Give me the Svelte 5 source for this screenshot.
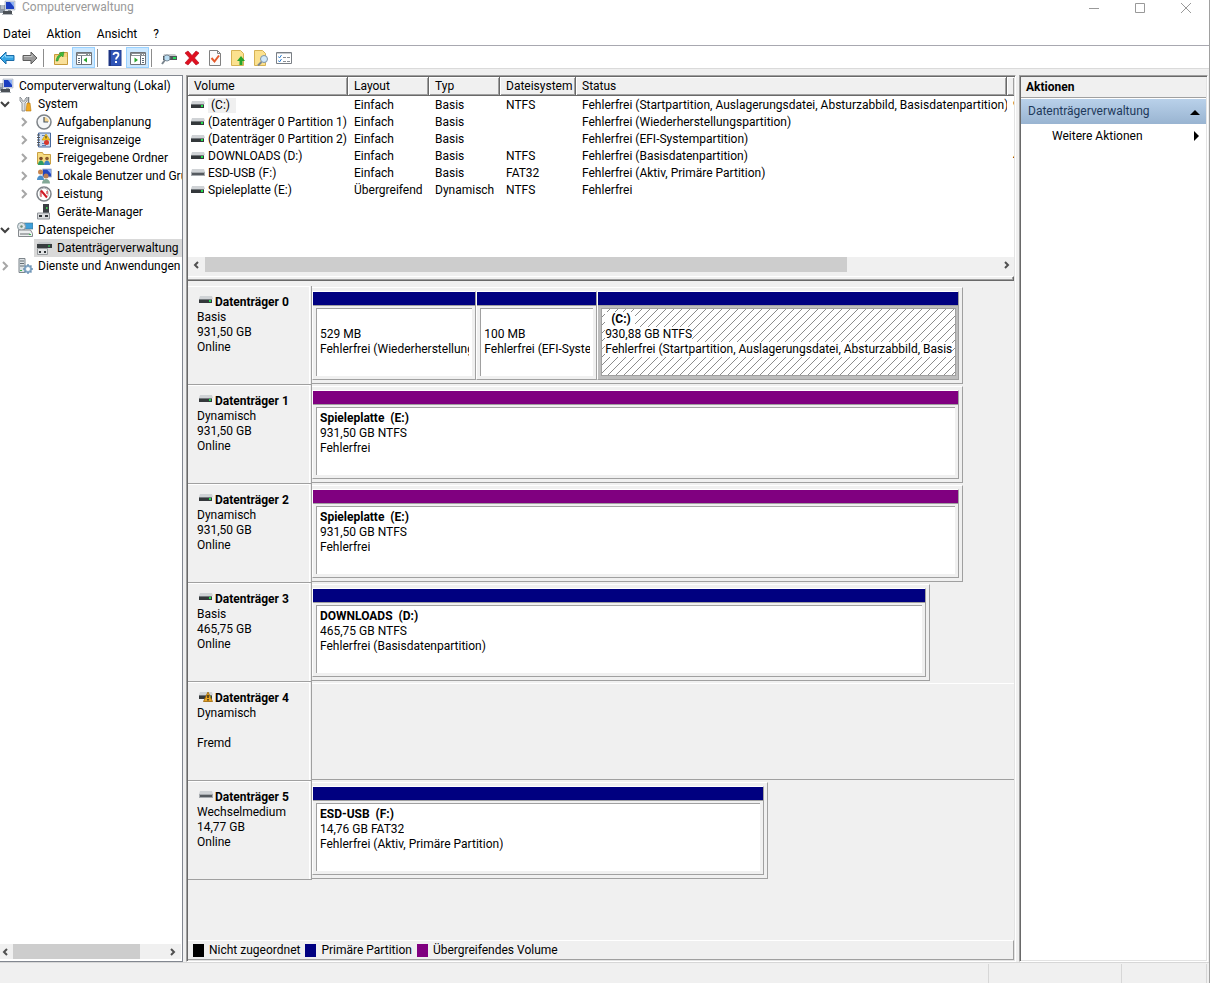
<script lang="ts">
  interface TreeNode {
    label: string;
    icon: string;
    level: number;
    arrow?: 'open' | 'closed';
    selected?: boolean;
  }

  interface Partition {
    title?: string;
    size: string;
    status: string;
    share: number;
    kind: 'primary' | 'spanned';
    selected?: boolean;
  }

  interface Disk {
    name: string;
    icon: string;
    type: string;
    size: string;
    state: string;
    width: number; // percent of the available strip
    partitions: Partition[];
  }

  const MENU = ['Datei', 'Aktion', 'Ansicht', '?'];

  const TOOLS = [
    { icon: 'back', label: 'Zurück' },
    { icon: 'forward', label: 'Vorwärts' },
    { icon: 'sep', label: '' },
    { icon: 'folder-up', label: 'Aufwärts' },
    { icon: 'pane-left', label: 'Konsolenstruktur', active: true },
    { icon: 'sep', label: '' },
    { icon: 'help', label: 'Hilfe' },
    { icon: 'pane-right', label: 'Aktionsbereich', active: true },
    { icon: 'sep', label: '' },
    { icon: 'rescan', label: 'Aktualisieren' },
    { icon: 'delete', label: 'Löschen' },
    { icon: 'doc-check', label: 'Eigenschaften' },
    { icon: 'doc-up', label: 'Öffnen' },
    { icon: 'doc-search', label: 'Durchsuchen' },
    { icon: 'list', label: 'Optionen' },
  ];

  const TREE: TreeNode[] = [
    { label: 'Computerverwaltung (Lokal)', icon: 'computer', level: 0 },
    { label: 'System', icon: 'tools', level: 1, arrow: 'open' },
    { label: 'Aufgabenplanung', icon: 'clock', level: 2, arrow: 'closed' },
    { label: 'Ereignisanzeige', icon: 'events', level: 2, arrow: 'closed' },
    { label: 'Freigegebene Ordner', icon: 'shared', level: 2, arrow: 'closed' },
    { label: 'Lokale Benutzer und Gruppen', icon: 'users', level: 2, arrow: 'closed' },
    { label: 'Leistung', icon: 'gauge', level: 2, arrow: 'closed' },
    { label: 'Geräte-Manager', icon: 'device', level: 2 },
    { label: 'Datenspeicher', icon: 'storage', level: 1, arrow: 'open' },
    { label: 'Datenträgerverwaltung', icon: 'diskmgmt', level: 2, selected: true },
    { label: 'Dienste und Anwendungen', icon: 'services', level: 1, arrow: 'closed' },
  ];

  const COLUMNS = ['Volume', 'Layout', 'Typ', 'Dateisystem', 'Status', ''];

  const VOLUMES = [
    { icon: 'drive', cells: ['(C:)', 'Einfach', 'Basis', 'NTFS', 'Fehlerfrei (Startpartition, Auslagerungsdatei, Absturzabbild, Basisdatenpartition)', '9'], selected: true },
    { icon: 'drive', cells: ['(Datenträger 0 Partition 1)', 'Einfach', 'Basis', '', 'Fehlerfrei (Wiederherstellungspartition)', ''] },
    { icon: 'drive', cells: ['(Datenträger 0 Partition 2)', 'Einfach', 'Basis', '', 'Fehlerfrei (EFI-Systempartition)', ''] },
    { icon: 'drive', cells: ['DOWNLOADS (D:)', 'Einfach', 'Basis', 'NTFS', 'Fehlerfrei (Basisdatenpartition)', '4'] },
    { icon: 'removable', cells: ['ESD-USB (F:)', 'Einfach', 'Basis', 'FAT32', 'Fehlerfrei (Aktiv, Primäre Partition)', ''] },
    { icon: 'drive', cells: ['Spieleplatte (E:)', 'Übergreifend', 'Dynamisch', 'NTFS', 'Fehlerfrei', ''] },
  ];

  const DISKS: Disk[] = [
    {
      name: 'Datenträger 0', icon: 'drive', type: 'Basis', size: '931,50 GB', state: 'Online', width: 92.8,
      partitions: [
        { size: '529 MB', status: 'Fehlerfrei (Wiederherstellungspartition)', share: 164, kind: 'primary' },
        { size: '100 MB', status: 'Fehlerfrei (EFI-Systempartition)', share: 120, kind: 'primary' },
        { title: '(C:)', size: '930,88 GB NTFS', status: 'Fehlerfrei (Startpartition, Auslagerungsdatei, Absturzabbild, Basisdatenpartition)', share: 364, kind: 'primary', selected: true },
      ],
    },
    {
      name: 'Datenträger 1', icon: 'drive', type: 'Dynamisch', size: '931,50 GB', state: 'Online', width: 92.8,
      partitions: [{ title: 'Spieleplatte  (E:)', size: '931,50 GB NTFS', status: 'Fehlerfrei', share: 1, kind: 'spanned' }],
    },
    {
      name: 'Datenträger 2', icon: 'drive', type: 'Dynamisch', size: '931,50 GB', state: 'Online', width: 92.8,
      partitions: [{ title: 'Spieleplatte  (E:)', size: '931,50 GB NTFS', status: 'Fehlerfrei', share: 1, kind: 'spanned' }],
    },
    {
      name: 'Datenträger 3', icon: 'drive', type: 'Basis', size: '465,75 GB', state: 'Online', width: 88,
      partitions: [{ title: 'DOWNLOADS  (D:)', size: '465,75 GB NTFS', status: 'Fehlerfrei (Basisdatenpartition)', share: 1, kind: 'primary' }],
    },
    { name: 'Datenträger 4', icon: 'drive-warn', type: 'Dynamisch', size: '', state: 'Fremd', width: 100, partitions: [] },
    {
      name: 'Datenträger 5', icon: 'removable', type: 'Wechselmedium', size: '14,77 GB', state: 'Online', width: 65,
      partitions: [{ title: 'ESD-USB  (F:)', size: '14,76 GB FAT32', status: 'Fehlerfrei (Aktiv, Primäre Partition)', share: 1, kind: 'primary' }],
    },
  ];

  const LEGEND = [
    { label: 'Nicht zugeordnet', kind: 'free' },
    { label: 'Primäre Partition', kind: 'primary' },
    { label: 'Übergreifendes Volume', kind: 'spanned' },
  ];
</script>

{#snippet icon(name: string)}
  <svg class="icon" viewBox="0 0 16 16" width="16" height="16" aria-hidden="true">
    {#if name === 'back'}
      <path d="M1 8l6-6v3.500h8v5H7V14z" fill="#35a4e4" stroke="#1b6ca8" />
      <path d="M3 8l3.500-3.500V7H14" fill="none" stroke="#8ed6fa" />
    {:else if name === 'forward'}
      <path d="M15 8L9 2v3.500H1v5h8V14z" fill="#9a9a9a" stroke="#5d5d5d" />
      <path d="M2 6.500h8v-2" fill="none" stroke="#c6c6c6" />
    {:else if name === 'folder-up'}
      <path d="M1.500 14.500v-10h5l1-2h7v12z" fill="#f3d27a" stroke="#c79b3b" />
      <path d="M2 7h12v7H2z" fill="#f9e09a" />
      <path d="M3 11c.5-4 2-6 4.500-6.500L6 3l5-1-1 5-1.300-1.300C7 6.500 5.500 8 5 11z" fill="#3fb93b" stroke="#23872a" stroke-width=".5" />
    {:else if name === 'pane-left' || name === 'pane-right'}
      <path d="M.5 2.500h15v12H.5z" fill="#fff" stroke="#707478" />
      <path d="M1 3h14v3H1z" fill="#8b9095" />
      <path d="M2 4.500h8M12 4.500h1M14 4.500h1" stroke="#fff" />
      {#if name === 'pane-left'}
        <path d="M5.500 6v8M2 8.500h2M2 10.500h2M2 12.500h2" stroke="#5f6b78" />
        <path d="M11 7.500v5L7.500 10z" fill="#27a52b" />
      {:else}
        <path d="M10.500 6v8M12 8.500h2M12 10.500h2M12 12.500h2" stroke="#5f6b78" />
        <path d="M4.500 7.500v5L8 10z" fill="#27a52b" />
      {/if}
    {:else if name === 'help'}
      <path d="M2 0h12v16H2z" fill="#2f55b8" stroke="#203b8c" />
      <path d="M2 0h2v16H2z" fill="#1d3480" />
      <path d="M6.500 5c0-3 5-3 5 0 0 2-2.500 2-2.500 4.500" fill="none" stroke="#fff" stroke-width="1.800" />
      <path d="M8 11h2v2H8z" fill="#fff" />
    {:else if name === 'rescan'}
      <path d="M3 4h11l2 2H2z" fill="#c7cacd" />
      <path d="M2 6h14v4H2z" fill="#4f5559" />
      <path d="M12 7h3v2h-3z" fill="#25d957" />
      <circle cx="6" cy="8" r="3" fill="#b8dcf2" stroke="#7b8b98" />
      <path d="M4 10l-3 4" stroke="#7a858e" stroke-width="2" />
    {:else if name === 'delete'}
      <path d="M1 3l3-2 4 4.500L12 1l3 2-4.500 5 4.500 5-3 2-4-4.500L4 15l-3-2 4.500-5z" fill="#e01020" stroke="#b00012" stroke-width=".6" />
    {:else if name === 'doc-check'}
      <path d="M2.500.5h8l3 3v12h-11z" fill="#fbfbfb" stroke="#808080" />
      <path d="M10.500.5v3h3" fill="none" stroke="#808080" />
      <path d="M4.500 8l3 3.500L12 5.500" fill="none" stroke="#e55a2b" stroke-width="2" />
    {:else if name === 'doc-up'}
      <path d="M1.500.5h9l3 3v12h-12z" fill="#fbe18e" stroke="#d6b254" />
      <path d="M11 6l4 5h-2.500v4h-3v-4H7z" fill="#27a52b" />
    {:else if name === 'doc-search'}
      <path d="M1.500.5h8l3 3v12h-11z" fill="#fbe18e" stroke="#d6b254" />
      <circle cx="11" cy="9" r="3.500" fill="#cfe8fa" stroke="#7d93a6" />
      <path d="M8.500 12L5 15.500" stroke="#7d8791" stroke-width="2" />
    {:else if name === 'list'}
      <path d="M.5 2.500h15v11H.5z" fill="#fff" stroke="#7a7f85" />
      <path d="M1 3h14v1H1z" fill="#c8ccd0" />
      <path d="M2.500 6.500l1 1.500 2-3M2.500 10.500l1 1.500 2-3" fill="none" stroke="#2f7fd0" />
      <path d="M7 7.500h3M11 7.500h3M7 11.500h3M11 11.500h3" stroke="#8a8f95" />
    {:else if name === 'computer'}
      <path d="M5 1h10v9H5z" fill="#d6dce6" stroke="#a1acc0" stroke-width=".6" />
      <path d="M6 2h8v7H6z" fill="#1c3fc0" />
      <path d="M10 2h4v5z" fill="#8fb2f4" />
      <path d="M0 5h5v8H0z" fill="#8d97a3" />
      <path d="M1 6h3M1 8h3" stroke="#e1e6eb" />
      <path d="M8 10h3v2H8z" fill="#8d97a3" />
      <path d="M3 11h9v4H3z" fill="#4b5157" />
      <path d="M2 14.500h11" stroke="#b3b8bd" />
    {:else if name === 'tools'}
      <path d="M3 1v4l2 2v8h3V7l2-2V1L8 3v2H5V3z" fill="#dfe2e4" stroke="#7c8286" stroke-width=".8" />
      <path d="M11.500 1v6" stroke="#7b8187" stroke-width="1.500" />
      <path d="M10 7h3l1 8h-5z" fill="#f0a922" stroke="#b8780d" stroke-width=".6" />
    {:else if name === 'clock'}
      <circle cx="8" cy="8" r="7" fill="#f4f6f8" stroke="#7e8388" stroke-width="1.500" />
      <path d="M8 8V3a5 5 0 0 1 5 5z" fill="#f5d590" />
      <path d="M8 3v5h4" fill="none" stroke="#4b5963" stroke-width="1.200" />
    {:else if name === 'events'}
      <path d="M2.500 1h12v14h-12z" fill="#cbdcf2" stroke="#48689c" />
      <path d="M1 3h3M1 5.500h3M1 8h3M1 10.500h3M1 13h3" stroke="#555" />
      <path d="M6 11.500h3M6 13.500h4M6 3.500h3" stroke="#5e7fb5" />
      <path d="M10 2l4 6H6z" fill="#f9c923" stroke="#c38e05" stroke-width=".6" />
      <path d="M10 4v2.500" stroke="#222" />
      <circle cx="10.500" cy="10.500" r="2.500" fill="#d7372d" />
    {:else if name === 'shared'}
      <path d="M1.500 14V2.500h5l1 2h7V14z" fill="#f7dc82" stroke="#c9a043" />
      <circle cx="5" cy="8.500" r="1.800" fill="#7a4a28" />
      <path d="M2 15c0-6 6-6 6 0z" fill="#2d9b62" />
      <circle cx="11" cy="8.500" r="1.800" fill="#8a5a30" />
      <path d="M8 15c0-6 6-6 6 0z" fill="#3b83c5" />
    {:else if name === 'users'}
      <path d="M6.500 1h9v8h-9z" fill="#2446bd" stroke="#b5bfd2" />
      <path d="M11 1.500h4V6z" fill="#89a9f0" />
      <circle cx="4.500" cy="4" r="2.500" fill="#c88650" />
      <path d="M1 12c0-6 7-6 7 0z" fill="#4b8fca" />
      <circle cx="10" cy="8" r="2.500" fill="#bd8055" />
      <path d="M6 15.500c0-6 8-6 8 0z" fill="#82a896" />
    {:else if name === 'gauge'}
      <circle cx="8" cy="8" r="7" fill="#fff" stroke="#7e8388" stroke-width="1.500" />
      <path d="M4 10V6a4 4 0 0 1 8 0v4" fill="none" stroke="#b1b5b9" />
      <path d="M5 4.500l6 7" stroke="#d01925" stroke-width="2" />
      <path d="M5 5v6M11 5v3" stroke="#d01925" />
    {:else if name === 'device'}
      <path d="M7 0h6v9H7z" fill="#3b3f43" />
      <path d="M10 3h1.500v2H10z" fill="#44cf57" />
      <path d="M1.500 9h12v6h-12z" fill="#dadcde" stroke="#909499" />
      <path d="M3 11h3v2H3zM9 11h3v2H9z" fill="#303438" />
    {:else if name === 'storage'}
      <path d="M7 1h9v6H7z" fill="#3e9fda" stroke="#41707f" stroke-width=".6" />
      <circle cx="4.500" cy="4.500" r="4" fill="#dce3e6" stroke="#87979c" />
      <circle cx="4.500" cy="4.500" r="1.200" fill="#6e8c72" />
      <path d="M1.500 8h12l2 3.500v3h-14z" fill="#eceeef" stroke="#85898d" />
      <path d="M3 12h10" stroke="#676c70" />
      <path d="M12 12h2v1h-2z" fill="#35c44e" />
    {:else if name === 'diskmgmt'}
      <path d="M3 2h11l2 2H1z" fill="#c6c9cb" />
      <path d="M1 4h15v4H1z" fill="#383c3f" />
      <path d="M12 5.500h2v1h-2z" fill="#32e55e" />
      <path d="M1.500 8.500h10v6h-10z" fill="#e2e4e5" stroke="#999da0" />
      <path d="M3 11h2v2H3zM8 11h2v2H8z" fill="#303438" />
    {:else if name === 'services'}
      <path d="M2 .5h6v14H2z" fill="#dde2e5" stroke="#7d858b" />
      <path d="M3 3h4M3 5.500h4M3 8h4" stroke="#656e75" />
      <path d="M3 12h2v1H3z" fill="#39b44b" />
      <circle cx="11" cy="11" r="3" fill="#fff" stroke="#86a9c8" stroke-width="2" />
      <path d="M11 6v2M11 14v2M6 11h2M14 11h2M7.500 7.500l1.500 1.500M13 13l1.500 1.500M14.500 7.500L13 9M9 13l-1.500 1.500" stroke="#6f94b5" stroke-width="1.500" />
    {/if}
  </svg>
{/snippet}

{#snippet driveIcon(name: string)}
  <svg class="drive" viewBox="0 0 14 12" width="14" height="12" aria-hidden="true">
    <path d="M1 2h12l1 3H0z" fill="#d0d3d6" />
    {#if name === 'removable'}
      <path d="M0 5h14v4H0z" fill="#a7abaf" />
      <path d="M1 6h12v2H1z" fill="#565b60" />
    {:else}
      <path d="M0 5h13v4H0z" fill="#34383b" />
      <path d="M0 5h13v1H0z" fill="#73787c" />
      <path d="M10 6h2v2h-2z" fill="#22e04c" />
    {/if}
    {#if name === 'drive-warn'}
      <path d="M9 2l4.500 9.500h-9z" fill="#e9a524" stroke="#9b6508" stroke-width=".8" />
      <path d="M9 5v3M9 9v1.500" stroke="#111" stroke-width="1.200" />
    {/if}
  </svg>
{/snippet}

{#snippet chevron(dir: string)}
  <svg class="chevron {dir}" viewBox="0 0 10 10" width="10" height="10" aria-hidden="true">
    {#if dir === 'open'}
      <path d="M1 3l4 4 4-4" />
    {:else if dir === 'left'}
      <path d="M7 2L4 5l3 3" />
    {:else if dir === 'right'}
      <path d="M4 2l3 3-3 3" />
    {:else}
      <path d="M3 1l4 4-4 4" />
    {/if}
  </svg>
{/snippet}

<div class="window">
  <header class="titlebar">
    <span class="app-icon">{@render icon('computer')}</span>
    <span class="title">Computerverwaltung</span>
    <div class="controls">
      <button type="button" aria-label="Minimieren">
        <svg width="12" height="12" viewBox="0 0 12 12"><path d="M1 6.500h10" /></svg>
      </button>
      <button type="button" aria-label="Maximieren">
        <svg width="12" height="12" viewBox="0 0 12 12"><path d="M1.500 1.500h9v9h-9z" /></svg>
      </button>
      <button type="button" aria-label="Schließen">
        <svg width="12" height="12" viewBox="0 0 12 12"><path d="M1 1l10 10M11 1L1 11" /></svg>
      </button>
    </div>
  </header>

  <nav class="menubar">
    {#each MENU as item}
      <button type="button">{item}</button>
    {/each}
  </nav>

  <div class="toolbar">
    {#each TOOLS as tool}
      {#if tool.icon === 'sep'}
        <span class="sep"></span>
      {:else}
        <button type="button" class:active={tool.active} aria-label={tool.label}>{@render icon(tool.icon)}</button>
      {/if}
    {/each}
  </div>

  <main class="panes">
    <aside class="tree-pane">
      <ul class="tree">
        {#each TREE as node}
          <li class="level-{node.level}">
            {#if node.level > 0}
              <span class="twisty">{#if node.arrow}{@render chevron(node.arrow)}{/if}</span>
            {/if}
            <button type="button" class="node" class:selected={node.selected}>
              {@render icon(node.icon)}
              <span>{node.label}</span>
            </button>
          </li>
        {/each}
      </ul>
      <div class="scrollbar tree-scroll">
        {@render chevron('left')}
        <div class="track"><div class="thumb" style="width: 84%"></div></div>
        {@render chevron('right')}
      </div>
    </aside>

    <section class="center-pane">
      <div class="volume-list">
        <table>
          <colgroup>
            <col class="c-volume" /><col class="c-layout" /><col class="c-type" />
            <col class="c-fs" /><col class="c-status" /><col />
          </colgroup>
          <thead>
            <tr>
              {#each COLUMNS as column}
                <th>{column}</th>
              {/each}
            </tr>
          </thead>
          <tbody>
            {#each VOLUMES as volume}
              <tr>
                {#each volume.cells as cell, i}
                  {#if i === 0}
                    <td class="name">
                      <div class="name-cell">
                        {@render driveIcon(volume.icon)}
                        <span class:focused={volume.selected}>{cell}</span>
                      </div>
                    </td>
                  {:else}
                    <td>{cell}</td>
                  {/if}
                {/each}
              </tr>
            {/each}
          </tbody>
        </table>
        <div class="scrollbar">
          {@render chevron('left')}
          <div class="track"><div class="thumb" style="width: 81%"></div></div>
          {@render chevron('right')}
        </div>
      </div>
      <div class="splitter"></div>

      <div class="disks">
        {#each DISKS as disk}
          <div class="disk">
            <div class="disk-label">
              <div class="disk-info">
                <div class="disk-name">{@render driveIcon(disk.icon)}<strong>{disk.name}</strong></div>
                <div>{disk.type}</div>
                <div>{disk.size}</div>
                <div>{disk.state}</div>
              </div>
            </div>
            <div class="strip-wrap">
              <div class="strip" class:empty={!disk.partitions.length} style="width: {disk.width}%">
                {#each disk.partitions as part}
                  <div class="partition {part.kind}" class:selected={part.selected} style="flex-grow: {part.share}">
                    <div class="bar"></div>
                    <div class="box">
                      {#if part.selected}
                        <svg class="hatch" width="100%" height="100%" aria-hidden="true">
                          <defs>
                            <pattern id="hatch" width="8" height="8" patternUnits="userSpaceOnUse">
                              <path d="M-1 9L9 -1M-1 1L1 -1M7 9L9 7" stroke="#8c8c8c" />
                            </pattern>
                          </defs>
                          <rect width="100%" height="100%" fill="url(#hatch)" />
                        </svg>
                      {/if}
                      <div class="lines">
                        <strong>{part.title ?? ''}</strong>
                        <span>{part.size}</span>
                        <span>{part.status}</span>
                      </div>
                    </div>
                  </div>
                {/each}
              </div>
            </div>
          </div>
        {/each}
      </div>

      <footer class="legend">
        {#each LEGEND as entry}
          <span class="swatch {entry.kind}"></span>
          <span class="legend-text">{entry.label}</span>
        {/each}
      </footer>
    </section>

    <aside class="actions-pane">
      <h2>Aktionen</h2>
      <button type="button" class="group">
        <span>Datenträgerverwaltung</span>
        <svg width="10" height="6" viewBox="0 0 10 6" aria-hidden="true"><path d="M0 6l5-5 5 5z" /></svg>
      </button>
      <button type="button" class="more">
        <span>Weitere Aktionen</span>
        <svg width="6" height="10" viewBox="0 0 6 10" aria-hidden="true"><path d="M0 0l5 5-5 5z" /></svg>
      </button>
    </aside>
  </main>

  <footer class="statusbar">
    <span></span><span></span><span></span>
  </footer>
</div>

<style>
  :global(body) {
    margin: 0;
    background: #f0f0f0;
  }

  .window {
    display: flex;
    flex-direction: column;
    box-sizing: border-box;
    min-height: 100vh;
    overflow: hidden;
    border-right: 1px solid #a0a0a0;
    background: #f0f0f0;
    color: #000;
    font-family: Roboto, 'Open Sans', sans-serif;
    font-size: 12px;
    line-height: 15px;
    white-space: nowrap;
  }

  button {
    margin: 0;
    padding: 0;
    border: 0;
    background: none;
    color: inherit;
    font: inherit;
    white-space: nowrap;
  }

  .icon,
  .drive,
  .chevron {
    display: block;
    flex: none;
  }

  .chevron path {
    fill: none;
    stroke: #505050;
    stroke-width: 2;
  }
  .chevron.closed path {
    stroke: #a6a6a6;
  }
  .chevron.open path {
    stroke: #404040;
  }

  .titlebar {
    display: flex;
    align-items: center;
    height: 15px;
    padding-bottom: 8px;
    background: #fff;
    color: #999;
  }
  .app-icon {
    width: 22px;
  }
  .title {
    flex: 1;
  }
  .controls {
    display: flex;
  }
  .controls button {
    display: flex;
    justify-content: center;
    width: 46px;
  }
  .controls svg {
    fill: none;
    stroke: #999;
  }

  .menubar {
    display: flex;
    gap: 16px;
    height: 22px;
    padding-left: 3px;
    border-bottom: 1px solid #a8a8b0;
    background: #fff;
  }

  .toolbar {
    display: flex;
    height: 21px;
    margin-left: -5px;
    padding-top: 1px;
    border-bottom: 1px solid #dadada;
    background: #fff;
  }
  .toolbar button {
    display: flex;
    align-items: center;
    justify-content: center;
    box-sizing: border-box;
    width: 23px;
    border: 1px solid transparent;
  }
  .toolbar .active {
    border-color: #99d1ff;
    background: #cce8ff;
  }
  .sep {
    width: 5px;
    margin: 2px 0 1px 2px;
    border-left: 1px solid #8c8c8c;
  }

  .panes {
    display: grid;
    flex: 1;
    grid-template-columns: 183px minmax(0, 1fr) 189px;
    margin-top: 6px;
    padding-right: 1px;
  }

  .tree-pane {
    display: flex;
    flex-direction: column;
    min-width: 0;
    border: 1px solid #828790;
    border-left: 0;
    background: #fff;
    overflow: hidden;
  }
  .tree {
    flex: 1;
    margin: 0;
    padding: 1px 0 0;
    list-style: none;
  }
  .tree li {
    display: flex;
    align-items: center;
    height: 18px;
  }
  .level-0 {
    margin-left: -4px;
  }
  .level-2 {
    padding-left: 19px;
  }
  .twisty {
    width: 15px;
    flex: none;
  }
  .node {
    display: flex;
    flex: 1;
    align-items: center;
    gap: 5px;
    height: 18px;
    min-width: 0;
    padding-left: 2px;
  }
  .node.selected {
    background: #d9d9d9;
  }

  .scrollbar {
    display: flex;
    align-items: center;
    gap: 4px;
    height: 15px;
    padding: 0 3px;
    background: #f0f0f0;
  }
  .tree-scroll {
    gap: 3px;
    margin: 0 1px 2px 0;
    padding: 0 4px 0 0;
  }
  .track {
    flex: 1;
  }
  .thumb {
    height: 15px;
    background: #cdcdcd;
  }

  .center-pane {
    display: flex;
    flex-direction: column;
    min-width: 0;
    margin: 0 3px;
    border: 1px solid;
    border-color: #a0a0a0 #fff #fff #a0a0a0;
    box-shadow: inset 1px 1px #696969, inset -1px -1px #e3e3e3;
    padding: 1px;
  }

  .volume-list {
    display: flex;
    flex-direction: column;
    justify-content: space-between;
    height: 195px;
    background: #fff;
  }
  table {
    width: 100%;
    table-layout: fixed;
    border-collapse: separate;
    border-spacing: 0;
  }
  .c-volume { width: 160px; }
  .c-layout { width: 81px; }
  .c-type { width: 71px; }
  .c-fs { width: 76px; }
  .c-status { width: 431px; }
  th {
    height: 18px;
    padding: 0 0 0 6px;
    border-right: 1px solid #696969;
    border-bottom: 1px solid #696969;
    background: #f0f0f0;
    box-shadow: inset 1px 1px #fff, inset -1px -1px #a0a0a0;
    font-weight: normal;
    text-align: left;
    overflow: hidden;
  }
  th:last-child {
    border-right: 0;
  }
  td {
    height: 16px;
    padding: 1px 0 0 6px;
    overflow: hidden;
  }
  td.name {
    padding-left: 3px;
  }
  .name-cell {
    display: flex;
    align-items: center;
    gap: 3px;
  }
  .focused {
    padding: 0 6px 0 3px;
    background: #f0f0f0;
  }

  .splitter {
    height: 2px;
    margin: 4px 0 5px;
    padding-bottom: 1px;
    border-top: 1px solid #fff;
    border-right: 1px solid #696969;
    border-bottom: 1px solid #696969;
    box-shadow: inset -1px -1px #a0a0a0;
  }

  .disks {
    flex: 1;
  }
  .disk {
    display: flex;
    min-height: 99px;
  }
  .disk-label {
    box-sizing: border-box;
    display: flex;
    flex: none;
    width: 124px;
    border-right: 1px solid #a0a0a0;
    border-bottom: 1px solid #a0a0a0;
  }
  .disk-info {
    flex: 1;
    margin-right: 1px;
    padding: 7px 0 0 9px;
    border-top: 1px solid #fff;
    border-right: 1px solid #fff;
  }
  .disk-info div {
    height: 15px;
  }
  .disk-info .disk-name {
    display: flex;
    gap: 2px;
    height: 16px;
    padding-left: 2px;
  }
  .disk-name strong {
    line-height: 17px;
  }

  .strip-wrap {
    display: flex;
    flex: 1;
    min-width: 0;
    padding: 1px 0;
  }
  .strip {
    display: flex;
    box-sizing: border-box;
    padding: 3px 3px 3px 0;
    border-top: 1px solid #fff;
    border-right: 1px solid #a0a0a0;
    border-bottom: 1px solid #a0a0a0;
  }
  .strip.empty {
    border-right: 0;
  }
  .partition {
    display: flex;
    flex: 1 1 0;
    flex-direction: column;
    box-sizing: border-box;
    min-width: 0;
    border: 1px solid;
    border-color: #fff #a0a0a0 #a0a0a0 #fff;
  }
  .bar {
    height: 13px;
    border-bottom: 1px solid #a0a0a0;
  }
  .primary .bar,
  .swatch.primary {
    background: #000080;
  }
  .spanned .bar,
  .swatch.spanned {
    background: #800080;
  }
  .box {
    position: relative;
    flex: 1;
    margin: 2px 3px 3px;
    padding: 3px 3px 0;
    border-top: 1px solid #a0a0a0;
    border-left: 1px solid #a0a0a0;
    background: #fff;
  }
  .partition.selected {
    background: #bdbdbd;
  }
  .selected .box {
    margin-right: 2px;
    border: 1px solid #a0a0a0;
  }
  .hatch {
    position: absolute;
    inset: 0;
  }
  .lines {
    position: relative;
    display: flex;
    flex-direction: column;
    align-items: flex-start;
    white-space: pre;
  }
  .lines strong,
  .lines span {
    height: 15px;
    max-width: 100%;
    overflow: hidden;
  }
  .selected .lines strong,
  .selected .lines span {
    background: #fff;
  }
  .selected .lines strong {
    padding: 0 4px 0 6px;
  }

  .legend {
    display: flex;
    align-items: center;
    height: 18px;
    padding-left: 5px;
    border-top: 1px solid #fff;
    border-right: 1px solid #a0a0a0;
    border-bottom: 1px solid #a0a0a0;
  }
  .swatch {
    width: 11px;
    height: 13px;
    margin-right: 5px;
    background: #000;
  }
  .legend-text {
    margin-right: 5px;
  }

  .actions-pane {
    display: flex;
    flex-direction: column;
    border: 1px solid;
    border-color: #a0a0a0 #fff #fff #a0a0a0;
    box-shadow: inset 1px 1px #696969, inset -1px -1px #e3e3e3;
    padding: 1px;
    background: #fff;
  }
  h2 {
    margin: 0 0 1px;
    padding: 3px 5px 2px;
    border-bottom: 1px solid #a0a0a0;
    background: #f0f0f0;
    font-size: 12px;
    line-height: 15px;
  }
  .group,
  .more {
    display: flex;
    align-items: center;
    justify-content: space-between;
    height: 25px;
    padding: 0 6px 0 7px;
  }
  .group {
    background: linear-gradient(#b9d1ea, #99b4d1);
    color: #1e395b;
  }
  .group svg {
    fill: #000;
  }
  .more {
    height: 24px;
    padding-left: 31px;
  }

  .statusbar {
    display: grid;
    grid-template-columns: minmax(0, 1fr) 133px 85px;
    height: 20px;
    padding-right: 2px;
    border-top: 1px solid #d7d7d7;
  }
  .statusbar span {
    margin-top: 1px;
    border-right: 1px solid #d7d7d7;
  }
</style>
